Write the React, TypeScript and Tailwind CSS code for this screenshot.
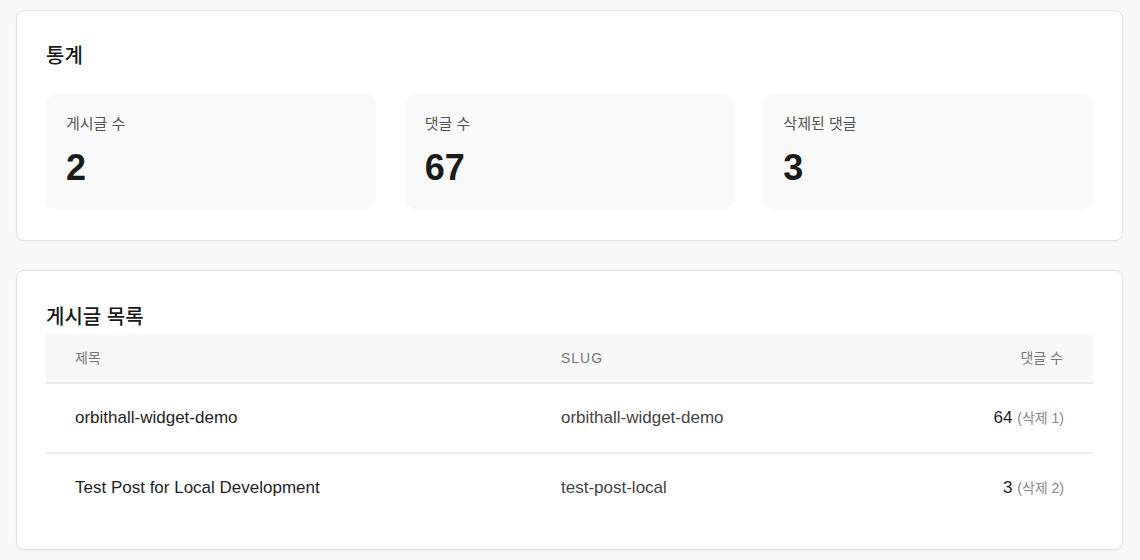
import React from "react";

const font = { fontFamily: '"Liberation Sans", "Noto Sans CJK KR", Arial, sans-serif' };

function Stat({ label, value }: { label: string; value: string }) {
  return (
    <div className="rounded-[10px] bg-[#f9f9f9] px-5 pt-5 pb-[21px]">
      <div className="text-[15px] leading-5 text-[#555]">{label}</div>
      <div className="mt-[14px] text-[36px] leading-10 font-bold text-[#1a1a1a]">{value}</div>
    </div>
  );
}

const rows = [
  { title: "orbithall-widget-demo", slug: "orbithall-widget-demo", count: "64", del: "(삭제 1)" },
  { title: "Test Post for Local Development", slug: "test-post-local", count: "3", del: "(삭제 2)" },
];

export default function App() {
  return (
    <div className="min-h-[560px] bg-[#f8f8f8] pl-4 pr-[17px] pt-[10px] pb-[10px]" style={font}>
      <div className="flex flex-col gap-[29px]">
        <section className="rounded-lg border border-[#e3e3e3] bg-white px-[29px] pt-[29px] pb-[31px] shadow-[0_1px_2px_rgba(0,0,0,0.03)]">
          <h2 className="text-[20px] leading-8 font-medium text-[#1a1a1a]">통계</h2>
          <div className="mt-[22px] grid grid-cols-3 gap-[29px]">
            <Stat label="게시글 수" value="2" />
            <Stat label="댓글 수" value="67" />
            <Stat label="삭제된 댓글" value="3" />
          </div>
        </section>

        <section className="rounded-lg border border-[#e3e3e3] bg-white px-[29px] pt-[30px] pb-[27px] shadow-[0_1px_2px_rgba(0,0,0,0.03)]">
          <h2 className="text-[20px] leading-8 font-medium text-[#1a1a1a]">게시글 목록</h2>
          <div className="mt-[1px]">
            <div className="grid h-[50px] grid-cols-[486px_1fr_220px] items-center border-b-2 border-[#ececec] bg-[#f8f8f8] pl-[29px] pr-[30px] text-[14px] text-[#777]">
              <div>제목</div>
              <div className="tracking-[1px]">SLUG</div>
              <div className="text-right">댓글 수</div>
            </div>
            {rows.map((r, i) => (
              <div
                key={r.slug}
                className={`grid grid-cols-[486px_1fr_220px] items-center pl-[29px] pr-[29px] ${
                  i === 0 ? "h-[70px] border-b-2 border-[#ececec]" : "h-[68px]"
                }`}
              >
                <div className="text-[17px] text-[#1f1f1f]">{r.title}</div>
                <div className="text-[17px] text-[#444]">{r.slug}</div>
                <div className="text-right text-[17px] text-[#1f1f1f]">
                  {r.count} <span className="text-[14px] text-[#888]">{r.del}</span>
                </div>
              </div>
            ))}
          </div>
        </section>
      </div>
    </div>
  );
}
